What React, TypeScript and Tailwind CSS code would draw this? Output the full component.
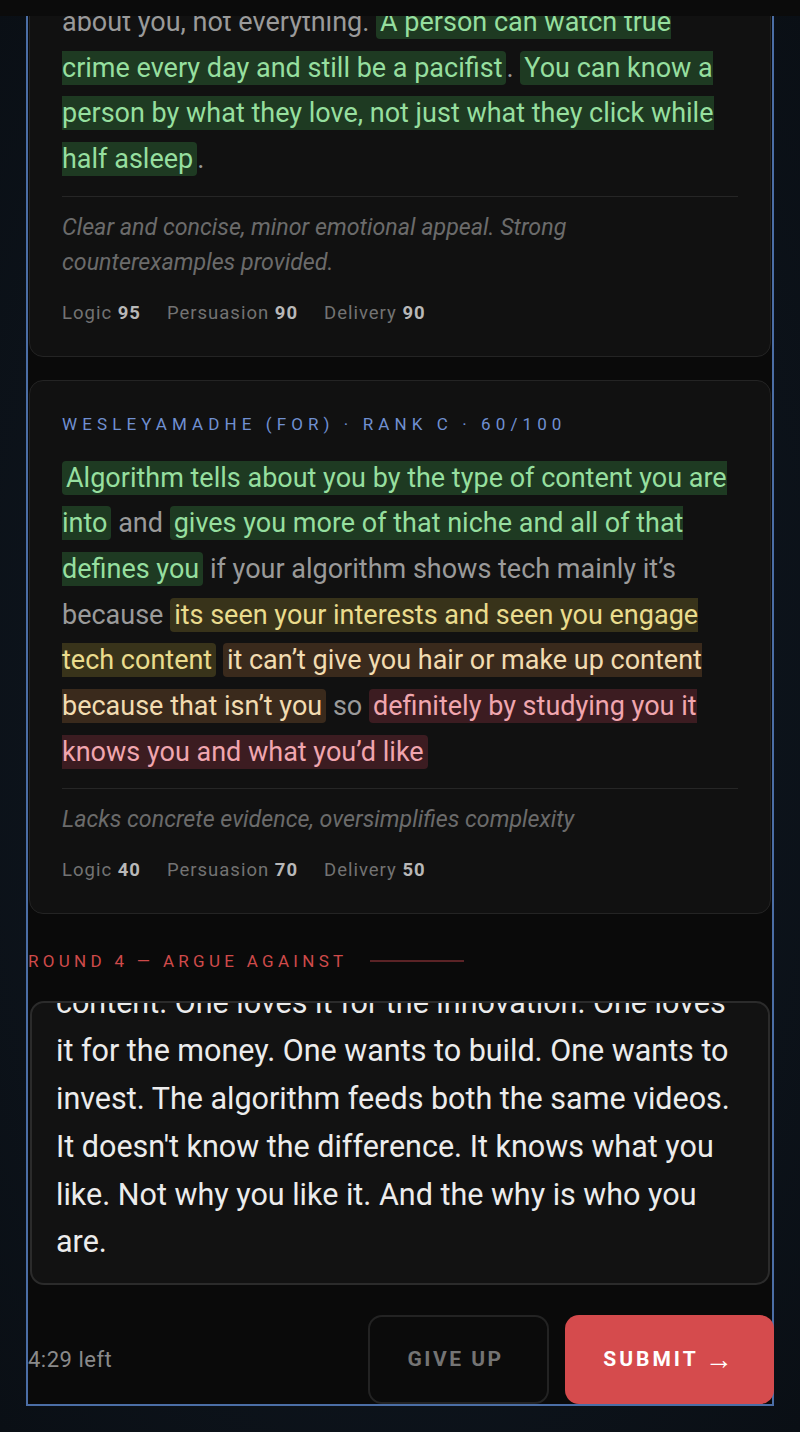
import type { ReactNode } from "react";

const BODY = "font-['Roboto',sans-serif]";
const COND = "font-['Roboto',sans-serif]";

type Tone = "green" | "yellow" | "orange" | "red";

const TONES: Record<Tone, string> = {
  green: "bg-[#1e3a22] text-[#96df9f]",
  yellow: "bg-[#38331a] text-[#eadc8d]",
  orange: "bg-[#3a2a1c] text-[#f2dcb1]",
  red: "bg-[#3c1c21] text-[#f0a6af]",
};

// highlighted span; slice decoration so wrapped fragments sit flush at the line start
function Mark({ tone, children }: { tone: Tone; children: ReactNode }) {
  return <span className={`${TONES[tone]} rounded-[4px] px-[4px] py-[1px]`}>{children}</span>;
}

function Scores({ logic, persuasion, delivery }: { logic: number; persuasion: number; delivery: number }) {
  const items: [string, number][] = [
    ["Logic", logic],
    ["Persuasion", persuasion],
    ["Delivery", delivery],
  ];
  return (
    <div className={`${COND} mt-[21px] flex gap-[26px] text-[18.5px] leading-[24px] tracking-[1px] text-[#737373]`}>
      {items.map(([label, value]) => (
        <span key={label}>
          {label} <b className="font-bold text-[#b8b8b8]">{value}</b>
        </span>
      ))}
    </div>
  );
}

function Card({
  header,
  children,
  feedback,
  scores,
  className = "",
}: {
  header?: ReactNode;
  children: ReactNode;
  feedback: ReactNode;
  scores: [number, number, number];
  className?: string;
}) {
  return (
    <section className={`mx-px rounded-[14px] border border-[#242424] bg-[#111111] px-[32px] pb-[31px] ${className}`}>
      {header}
      <p className={`${BODY} whitespace-nowrap text-[27px] leading-[45.67px] text-[#9a9a9a]`}>{children}</p>
      <div className="mt-[13px] h-px bg-[#262626]" />
      <p className={`${BODY} mt-[13px] text-[23.25px] italic leading-[35px] text-[#6b6b6b]`}>{feedback}</p>
      <Scores logic={scores[0]} persuasion={scores[1]} delivery={scores[2]} />
    </section>
  );
}

export default function App() {
  return (
    <div className="relative h-[1432px] overflow-hidden bg-[radial-gradient(ellipse_at_center,#111a25_0%,#0a0f15_100%)]">
      <div className="absolute inset-x-0 top-0 z-10 h-[16px] bg-[#0b0b0b]" />

      <main className="mx-[26px] -mt-[40px] flex h-[1446px] flex-col border-2 border-[#4b6ea6] bg-[#0a0a0a]">
        <Card
          className="pt-[37px]"
          feedback={
            <>
              Clear and concise, minor emotional appeal. Strong
              <br />
              counterexamples provided.
            </>
          }
          scores={[95, 90, 90]}
        >
          about you, not everything. <Mark tone="green">A person can watch true
          <br />
          crime every day and still be a pacifist</Mark>. <Mark tone="green">You can know a
          <br />
          person by what they love, not just what they click while
          <br />
          half asleep</Mark>.
        </Card>

        <Card
          className="mt-[23px] pt-[31px]"
          header={
            <h3 className={`${COND} mb-[20px] text-[17px] leading-[24px] tracking-[5.1px] text-[#7090d2]`}>
              WESLEYAMADHE (FOR) · RANK C · 60/100
            </h3>
          }
          feedback="Lacks concrete evidence, oversimplifies complexity"
          scores={[40, 70, 50]}
        >
          <Mark tone="green">Algorithm tells about you by the type of content you are
          <br />
          into</Mark> and <Mark tone="green">gives you more of that niche and all of that
          <br />
          defines you</Mark> if your algorithm shows tech mainly it’s
          <br />
          because <Mark tone="yellow">its seen your interests and seen you engage
          <br />
          tech content</Mark> <Mark tone="orange">it can’t give you hair or make up content
          <br />
          because that isn’t you</Mark> so <Mark tone="red">definitely by studying you it
          <br />
          knows you and what you’d like</Mark>
        </Card>

        <div className="mt-[36px] flex items-center gap-[22px]">
          <h2 className={`${COND} text-[17px] leading-[22px] tracking-[4.3px] text-[#cf4a4a]`}>ROUND 4 — ARGUE AGAINST</h2>
          <div className="h-[2px] w-[94px] bg-[#5b2326]" />
        </div>

        <div className="mx-[2px] mt-[29px] h-[284px] overflow-hidden rounded-[14px] border-2 border-[#2b2b2b] bg-[#121212] px-[24px]">
          <p className={`${BODY} -mt-[24px] whitespace-nowrap text-[30.5px] leading-[47.8px] text-[#ececec]`}>
            content. One loves it for the innovation. One loves
            <br />
            it for the money. One wants to build. One wants to
            <br />
            invest. The algorithm feeds both the same videos.
            <br />
            It doesn't know the difference. It knows what you
            <br />
            like. Not why you like it. And the why is who you
            <br />
            are.
          </p>
        </div>

        <footer className="mt-auto flex items-center">
          <span className={`${COND} text-[22px] tracking-[0.5px] text-[#8a8a8a]`}>4:29 left</span>
          <div className="-mr-[2px] ml-auto flex gap-[16px]">
            <button className={`${COND} h-[89px] w-[181px] rounded-[14px] border-2 border-[#232323] bg-[#0b0b0b] pr-[6px] text-[21px] font-bold tracking-[2.5px] text-[#747474]`}>
              GIVE UP
            </button>
            <button className={`${COND} flex h-[89px] w-[209px] items-center justify-center gap-[6px] rounded-[14px] bg-[#d54b4d] text-[21px] font-bold tracking-[3px] text-white`}>
              SUBMIT
              <span className="text-[28px] font-light leading-none">→</span>
            </button>
          </div>
        </footer>
      </main>
    </div>
  );
}
